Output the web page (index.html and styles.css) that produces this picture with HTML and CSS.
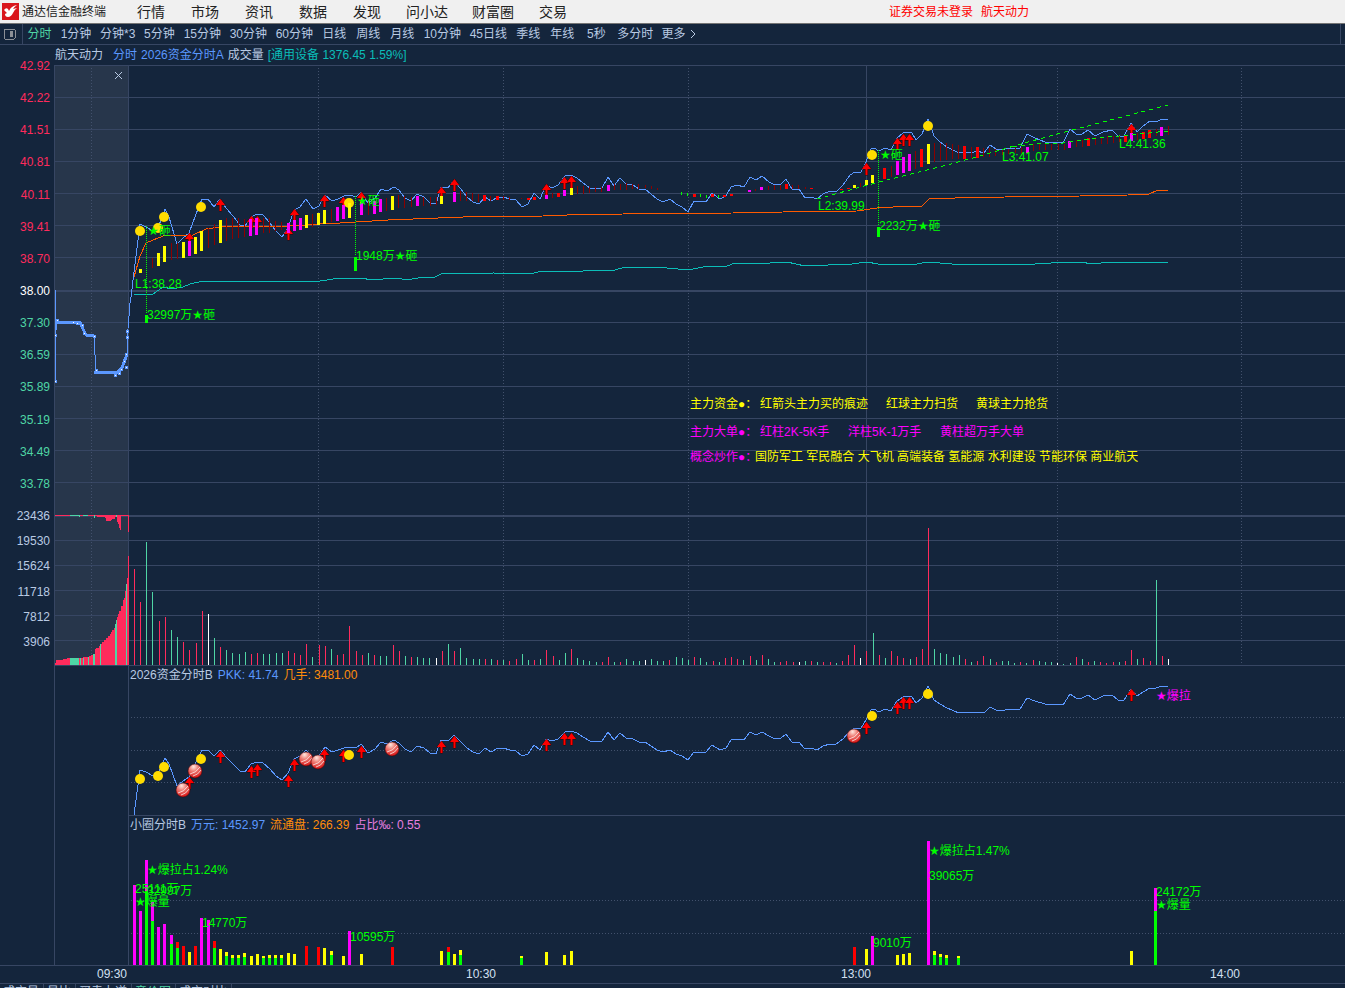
FILE: index.html
```html
<!DOCTYPE html>
<html lang="zh-CN">
	<head>
		<meta charset="utf-8">
		<title>通达信金融终端</title>
		<link rel="stylesheet" href="styles.css">
	</head>

	<body>

		<header class="titlebar">
			<svg class="logo" viewBox="0 0 17 17">
				<rect width="17" height="17" rx="1" fill="#d9161c"/>
				<path d="M2 7 Q4 4 6 6 L7 8 Q9 3 15 2 Q12 4 11 6 L15 5 Q12 7 11 10 Q9 14 6 14 Q3 14 3 11 L5 10 Z" fill="#fff"/>
			</svg>
			<h1>通达信金融终端</h1>
			<nav>
				<a href="#">行情</a><a href="#">市场</a><a href="#">资讯</a><a href="#">数据</a><a href="#">发现</a><a href="#">问小达</a><a href="#">财富圈</a><a href="#">交易</a>
			</nav>
			<div class="login"><a href="#">证券交易未登录</a><a href="#">航天动力</a></div>
		</header>

		<div class="periods">
			<button class="toggle" aria-label="侧栏">
				<svg width="13" height="12" viewBox="0 0 13 12"><rect x="1" y="1" width="11" height="10" rx="1" fill="none" stroke="#8b8f96"/><rect x="7" y="3" width="3" height="6" fill="#8b8f96"/></svg>
			</button>
			<div class="list">
				<button class="active">分时</button><button class="mid">1分钟</button><button class="mid">分钟*3</button><button class="mid">5分钟</button><button class="wide">15分钟</button><button class="wide">30分钟</button><button class="wide">60分钟</button><button>日线</button><button>周线</button><button>月线</button><button class="wide">10分钟</button><button class="wide">45日线</button><button>季线</button><button>年线</button><button>5秒</button><button>多分时</button><button>更多<svg width="8" height="10" viewBox="0 0 8 10"><path d="M2 1 L6 5 L2 9" fill="none" stroke="currentColor"/></svg></button>
			</div>
		</div>

		<main>
			<div class="info main-info">
				<span class="stock">航天动力</span>
				<span class="blue">分时</span>
				<span class="blue">2026资金分时A</span>
				<span>成交量</span>
				<span class="teal">[通用设备 1376.45 1.59%]</span>
			</div>

			<section class="row">
				<ul class="axis price-axis">
					<li class="up">42.92</li><li class="up">42.22</li><li class="up">41.51</li><li class="up">40.81</li><li class="up">40.11</li><li class="up">39.41</li><li class="up">38.70</li>
					<li class="flat">38.00</li>
					<li class="down">37.30</li><li class="down">36.59</li><li class="down">35.89</li><li class="down">35.19</li><li class="down">34.49</li><li class="down">33.78</li>
				</ul>
				<div class="plot">
					<svg id="price" class="price" viewBox="55 65 1290 450" preserveAspectRatio="xMinYMin meet"></svg>
					<button class="close" aria-label="关闭"><svg width="7" height="7" viewBox="0 0 7 7"><path d="M0 0 L7 7 M7 0 L0 7" stroke="currentColor"/></svg></button>
				</div>
			</section>

			<section class="row">
				<ul class="axis">
					<li>23436</li><li>19530</li><li>15624</li><li>11718</li><li>7812</li><li>3906</li>
				</ul>
				<div class="plot volume-plot">
					<svg id="volume" class="volume" viewBox="55 515 1290 150" preserveAspectRatio="xMinYMin meet"></svg>
				</div>
			</section>

			<section class="row">
				<div class="axis"></div>
				<div class="plot">
					<div class="sub">
						<div class="info">
							<span>2026资金分时B</span>
							<span class="blue">PKK: 41.74</span>
							<span class="orange">几手: 3481.00</span>
						</div>
						<svg id="fund" class="small" viewBox="129 685 1216 130" preserveAspectRatio="xMinYMin meet"></svg>
					</div>
				</div>
			</section>

			<section class="row">
				<div class="axis"></div>
				<div class="plot">
					<div class="sub ruled">
						<div class="info">
							<span>小圈分时B</span>
							<span class="blue">万元: 1452.97</span>
							<span class="orange">流通盘: 266.39</span>
							<span class="pink">占比‰: 0.55</span>
						</div>
						<svg id="circle" class="small" viewBox="129 835 1216 130" preserveAspectRatio="xMinYMin meet"></svg>
					</div>
				</div>
			</section>

			<svg id="times" class="times" viewBox="0 966 1345 17" preserveAspectRatio="xMinYMin meet"></svg>
		</main>

		<footer>
			<button>成交量</button><button>量比</button><button>买卖力道</button><button class="active">竞价图</button><button>成交对比</button>
		</footer>

		<script src="chart.js"></script>
	</body>
</html>
```

FILE: styles.css
```css
*{
	box-sizing: border-box;
}
html{
	overflow: hidden;
}
body{
	margin: 0;
	background: #14253c;
	color: #b9cae3;
	font: 12px/16px "Liberation Sans", "DejaVu Sans", "Noto Sans CJK SC", sans-serif;
	white-space: nowrap;
}
button{
	margin: 0;
	padding: 0;
	border: 0;
	background: none;
	color: inherit;
	font: inherit;
}
a{
	color: inherit;
	text-decoration: none;
}
svg{
	display: block;
}
ul{
	list-style: none;
	margin: 0;
	padding: 0;
}

.titlebar{
	display: flex;
	align-items: center;
	height: 24px;
	padding-left: 2px;
	background: #f0f0f0;
	border-bottom: 1px solid #747474;
	color: #222;
}
.logo{
	width: 17px;
	height: 17px;
	margin-right: 3px;
}
.titlebar h1{
	margin: 0;
	font-size: 12px;
	font-weight: normal;
}
.titlebar nav{
	display: flex;
	margin-left: 18px;
	font-size: 14px;
}
.titlebar nav a{
	min-width: 54px;
	padding: 0 12px;
	text-align: center;
}
.login{
	display: flex;
	gap: 8px;
	margin-left: 309px;
	color: #f00;
}

.periods{
	display: flex;
	height: 21px;
	padding-right: 4px;
	border-bottom: 1px solid #374663;
}
.toggle{
	width: 23px;
	padding-left: 3px;
	border-right: 1px solid #374663;
}
.periods .list{
	display: flex;
	flex: 1;
	border-right: 1px solid #374663;
}
.list button{
	display: flex;
	align-items: center;
	justify-content: center;
	min-width: 34px;
	padding: 0 4px;
}
.list button:first-child{
	min-width: 33px;
}
.list button.mid{
	min-width: 40px;
}
.list button.wide{
	min-width: 46px;
}
.list svg{
	margin-left: 4px;
}
.active{
	color: #4fd5a5;
}

.info{
	display: flex;
	gap: 5px;
	height: 19px;
	padding-left: 1px;
	line-height: 19px;
}
.main-info{
	gap: 4px;
	height: 20px;
	padding-left: 55px;
	line-height: 21px;
}
.stock{
	margin-right: 6px;
}
.blue{ color: #5b98ff; }
.teal{ color: #0bbdb8; }
.orange{ color: #ff8c0a; }
.pink{ color: #e87fe0; }
.up{ color: #ff2b5c; }
.flat{ color: #fff; }
.down{ color: #4fd5a5; }

.row{
	display: flex;
}
.axis{
	display: flex;
	flex-direction: column;
	flex: none;
	width: 54px;
	padding-right: 4px;
	margin: -7px 0 7px;
	text-align: right;
}
.axis li{
	flex: 1;
}
.plot{
	position: relative;
	flex: 1;
	min-width: 0;
	border-left: 1px solid #374663;
}
.volume-plot{
	border-bottom: 1px solid #374663;
}
.sub{
	margin-left: 73px;
	border-left: 1px solid #374663;
}
.ruled{
	border-top: 1px solid #374663;
}
.close{
	position: absolute;
	left: 60px;
	top: 7px;
}

.plot > svg, .sub > svg{
	width: 100%;
}
svg.price{ height: 450px; }
svg.volume{ height: 150px; }
svg.small{ height: 130px; }
.times{
	width: 100%;
	height: 18px;
	border-top: 1px solid #374663;
}
.times text{
	fill: #d3e0f2;
}

footer{
	display: flex;
	height: 16px;
	border-top: 1px solid #374663;
}
footer button{
	padding: 0 4px 0 3px;
	border-right: 1px solid #374663;
	line-height: 14px;
}

/* chart marks */
line, rect, polyline, .crisp{
	shape-rendering: crispEdges;
}
.grid{ stroke: #374663; }
.dots{ stroke: #42516c; stroke-dasharray: 1 2; }
.auction{ fill: #27364b; }
.line{ fill: none; stroke: #5b98ff; }
.thick{ fill: none; stroke: #5b98ff; stroke-width: 3; }
.avg{ fill: none; stroke: #ff5a00; }
.cost{ fill: none; stroke: #0bbdb8; }
.trend{ fill: none; stroke: #0f0; stroke-dasharray: 4 4; }
.drop{ stroke: #0f0; stroke-dasharray: 1 1; }
.ball{ fill: #ffdc00; }
.arrow{ fill: #f00; stroke: #300; stroke-width: 1; paint-order: stroke; }
.txt-g{ fill: #0f0; }
.txt-y{ fill: #ff0; }
.txt-m{ fill: #f0f; }
```

FILE: chart.js
```js
const FAR = 4000;
const colors = { y: "#ff0", m: "#f0f", r: "#f00", g: "#0f0", d: "#8b0000" };
const volColors = { r: "#ff2b5c", g: "#4fd5a5", w: "#fff" };

function add(id, markup) {
	document.getElementById(id).innerHTML += markup;
}
function hline(y, cls = "grid", x = 55) {
	return `<line class="${cls}" x1="${x}" x2="${FAR}" y1="${y + 0.5}" y2="${y + 0.5}"/>`;
}
function vline(x, y1, y2, cls = "grid") {
	return `<line class="${cls}" x1="${x + 0.5}" x2="${x + 0.5}" y1="${y1}" y2="${y2}"/>`;
}
function bar(x, y1, y2, color, w = 3) {
	return `<rect x="${x}" y="${y1}" width="${w}" height="${Math.max(1, y2 - y1)}" fill="${color}"/>`;
}
function poly(points, cls) {
	return `<polyline class="${cls}" points="${points}"/>`;
}
function text(x, mid, str, cls) {
	return `<text class="${cls}" x="${x}" y="${mid + 4}">${str}</text>`;
}
function ball(x, y) {
	return `<circle class="ball" cx="${x}" cy="${y}" r="5"/>`;
}
function redBall(x, y) {
	return `<g transform="translate(${x} ${y})"><circle r="7" fill="url(#shine)" stroke="#400" stroke-width="0.5"/>
		<path d="M-5 3 Q1 2 5 -4 M-2 5 Q3 4 6 -1" fill="none" stroke="#fff" stroke-opacity="0.7"/></g>`;
}
function arrow(x, y) {
	return `<path class="arrow" d="M${x + 0.5} ${y} l4.5 6 h-3.5 v6 h-2 v-6 h-3.5 z"/>`;
}
const pairs = s => s.trim().split(/\s+/).map(p => p.split(",").map(Number));

// minute prices, shared by the price panel and the fund panel
const prices = `129,310 131,297 134,272 140,224 146,227 153,231 158,228 165,209 169,217 177,244 183,238 189,233 196,214 202,199 208,199 214,207 220,199 226,208 233,216 240,225 245,226 251,217 257,214 263,215 270,223 276,231 282,237 288,228 294,210 300,207 306,199 313,209 319,206 325,195
	332,201 338,199 344,196 350,195 356,197 361,192 368,203 375,198 381,189 387,191 394,187 399,190 405,198 411,201 417,194 424,197 430,203 436,204 441,187 448,188 454,180 460,188 467,197 473,202 479,204 485,197 491,201 498,197 503,197 510,199 516,200 522,207 528,204 534,193 540,199 546,185 552,188 558,185 565,176 571,175 577,178 583,183 590,188 597,188 602,188 608,177 614,186 620,178 626,184 633,185 639,189 645,189 651,194 657,199 663,202 670,199 676,204 682,207 688,212
	694,201 706,202 712,193 720,199 726,196 731,187 737,185 744,187 750,177 756,180 762,176 769,182 775,185 781,184 786,179 792,189 799,189 805,198 811,197 817,199 823,194 830,191 836,192 843,185 850,175 855,172 861,172 866,162 871,149 874,148 879,151 885,148 891,150 897,138 903,133 909,132 912,133 916,140 922,134 928,119 934,136 940,142 947,147 959,153 965,152 971,153 977,151 984,153 990,145 996,149 1002,150 1008,148 1015,148 1020,148 1027,134 1035,138 1045,142 1063,143
	1070,129 1076,134 1082,134 1088,130 1095,136 1103,132 1112,130 1118,136 1124,136 1131,123 1137,132 1143,126 1150,121 1156,122 1162,119 1168,119`;

const avg = `134,277 140,256 146,243 158,238 166,235 193,235 206,229 220,227 243,226 290,226 320,224 340,223 388,220 463,217 543,216 567,215 623,214 733,213 783,212 857,211 877,208 893,207 922,206 929,199 955,198 1005,197 1080,196 1128,195 1149,194 1158,190 1168,190`;
const cost = `134,294 147,295 153,294 163,287 172,289 183,287 190,284 203,281 217,281 240,281 320,281 340,278 363,278 370,280 397,278 407,280 423,277 433,278 443,273 457,273 473,274 493,273 530,274 542,271 583,271 615,270 625,267 657,267 688,270 703,267 727,266 735,263 770,263 787,262 805,266 852,264 867,262 878,264 917,264 927,262 952,264 1035,264 1067,262 1080,262 1093,264 1110,262 1130,263 1147,262 1168,262`;

// kind,x,top,bottom
const candles = `y140,269,273 d152,258,268 y158,253,266 y164,246,262 d171,243,260 d177,243,259 y183,242,258 m189,241,256 y195,237,254 y201,231,251 d208,228,248 d214,224,245 y220,220,243 d226,218,241 d232,218,239 d238,218,238 d244,219,237 m250,219,236 m256,218,235 d263,218,233 d269,218,233 d275,221,231 d281,222,230 m288,223,233 m294,220,231 m300,218,230 y306,215,228 d312,214,227 y318,213,225 y324,210,224
	d331,209,222 m337,207,221 m343,205,219 y349,203,218 m361,202,215 d368,200,215 m374,201,214 m380,199,212 d386,198,211 y392,196,210 d398,195,208 d404,196,208 d411,197,207 m417,196,206 d423,197,206 d430,197,206 d436,197,205 y441,196,204 m454,192,202 d460,191,201 d466,192,201 d472,193,201 d478,194,202 r484,195,201 d490,196,201 r497,196,200 d503,196,200 d509,197,200 d521,198,199 r528,198,200 r534,197,200 m546,195,199 d552,193,198 r558,193,197 m564,190,196 y571,188,195 d577,186,194 d583,186,194 d589,187,193 d595,187,192 d601,187,192 m608,185,191 d614,184,190 d620,184,190 d626,183,190 d632,184,189 d638,184,189 d645,185,188 d651,186,189 d657,188,190
	r694,194,197 r712,194,197 r724,195,197 r731,194,196 m749,190,192 d755,189,191 m761,187,190 d768,186,190 d774,185,190 d780,185,190 r786,184,189 d792,185,189 d798,185,189 d805,187,189 r811,188,189 r841,189,190 r848,188,189 y854,185,188 d860,183,187 y866,180,185 y872,175,183 r884,168,179 d891,166,177 m897,161,175 m903,157,173 m909,154,171 d915,151,169 r921,149,167 y928,144,164 d934,143,162 d940,143,161 d946,143,160 d952,144,159 d958,145,159 r964,146,159 d971,147,158 r977,147,158 d983,148,157 d989,148,157 d995,149,156 d1002,149,155 d1008,149,154 d1015,148,153 d1021,147,153
	m1027,147,153 d1033,144,151 d1039,144,150 d1045,144,150 d1051,144,150 d1058,144,150 d1064,144,150 m1069,141,148 d1076,140,147 d1082,140,147 r1088,138,146 d1095,137,145 d1101,137,144 d1107,136,144 d1113,136,143 d1119,136,142 r1125,135,142 m1131,133,141 d1137,133,140 r1143,132,139 r1149,130,138 d1156,129,136 m1161,127,136 d1168,126,135`;

// bar heights per minute
const volumes = `r96 r63 g123 g73 r44 r48 g35 g28 r23 r15 r22 r54 w51 g27 r18 g15 g12 g11 g13 r11 r12 g11 g11 g12 g12 r14 r12 r10 r21 g8 r20 r19 g16 r10 r11
	r39 r14 r10 g12 r10 g9 g9 r20 r14 g9 r8 g8 g7 g7 w7 r14 g21 r14 g17 g7 g6 g6 r6 g6 r5 g5 r4 r6 g11 g5 r5 g6 r15 r9 g5 g12 r16 g7 g5
	g4 g3 r3 r8 g3 r3 g6 g4 g4 w5 g6 g4 g4 r5 g8 g7 g5 r8 g7 g3 r4 g3 r7 r8 r6 g5 r9 g5 r10 g6 g3 r3 r4 r3 w3 g4 r4 g3 r3 r3 g2 r4 r10 r20 w7 r14 g32 r10 g7 r14 r9 r7 g6 r8 r16 r137 g16 g12 g11 g8 g10 r6
	g3 r4 r9 g6 r3 g4 g4 g2 r3 g2 r5 g4 g3 g3 w2 g1 g2 r8 g6 r3 g4 r3 r2 r3 g3 r4 r15 g6 r7 r4 g85 r9 w6`.trim().split(/\s+/);

const up = "#ff2b5c", down = "#4fd5a5";

let p = `<rect class="auction" x="55" y="66" width="73" height="450"/>`;
p += [65, 97, 129, 161, 193, 225, 257, 322, 354, 386, 418, 450, 482].map(y => hline(y)).join("");
p += hline(290) + hline(291);
p += [91, 318, 503, 688, 1057, 1241].map(x => vline(x, 68, 515, "dots")).join("");
p += vline(128, 66, 515) + vline(866, 66, 515);

// call auction
p += poly("55.5,290 55.5,381 55.5,335 57,320", "line") + poly("57,322 80,322 83,329 86,335 94,336", "thick") + poly("94.5,336 95.5,372", "line");
p += poly("94,372 118,372 122,368 124,362 126,357 127,354", "thick") + poly("127.5,355 127.5,335 129.5,310", "line");
p += pairs("55,381 55,335 57,320 73,322 77,323 82,325 84,333 94,336 96,370 115,375 119,373 121,369 124,361 126,367 126,354 127,337 127,331")
	.map(([x, y]) => bar(x - 1, y - 1, y + 2, "#5b98ff") + bar(x, y, y + 1, "#fff", 1)).join("");

p += poly(prices, "line") + poly(avg, "avg") + poly(cost, "cost");
p += pairs("189,233 220,199 251,216 257,216 288,228 294,209 324,195 343,197 361,192 441,187 454,179 546,184 564,177 571,176 866,163 897,138 903,134 909,134 1131,124").map(a => arrow(...a)).join("");
p += pairs("140,231 158,228 164,217 201,207 349,203 872,155 928,126").map(a => ball(...a)).join("");
p += candles.split(/\s+/).map(c => {
	const [x, y1, y2] = c.slice(1).split(",").map(Number);
	return c[0] === "d" ? bar(x, y1, y2, colors.d, 1) : bar(x - 1, y1, y2, colors[c[0]]);
}).join("");
p += pairs("681,192 687,193 700,194 706,195 718,195").map(([x, y]) => bar(x, y, y + 3, "#0f0", 1)).join("");
p += poly("817,199 879,182 947,165 980,156 1007,148 1057,134 1168,105", "trend");
p += poly("1013,147 1033,144 1063,143 1097,138 1130,135 1168,131", "trend");
p += vline(146, 226, 314, "drop") + bar(145, 315, 323, "#0f0");
p += vline(355, 196, 255, "drop") + bar(354, 257, 271, "#0f0");
p += vline(878, 150, 226, "drop") + bar(877, 227, 237, "#0f0");
p += text(148, 231, "★砸", "txt-g") + text(357, 201, "★砸", "txt-g") + text(880, 155, "★砸", "txt-g");
p += text(147, 315, "32997万★砸", "txt-g") + text(356, 256, "1948万★砸", "txt-g") + text(879, 226, "2232万★砸", "txt-g");
p += text(135, 284, "L1:38.28", "txt-g") + text(818, 206, "L2:39.99", "txt-g") + text(1002, 157, "L3:41.07", "txt-g") + text(1119, 144, "L4:41.36", "txt-g");

p += text(690, 404, "主力资金●：", "txt-y") + text(760, 404, "红箭头主力买的痕迹", "txt-y") + text(886, 404, "红球主力扫货", "txt-y") + text(976, 404, "黄球主力抢货", "txt-y");
p += text(690, 432, "主力大单●：", "txt-m") + text(760, 432, "红柱2K-5K手", "txt-m") + text(848, 432, "洋柱5K-1万手", "txt-m") + text(940, 432, "黄柱超万手大单", "txt-m");
p += text(690, 457, "概念炒作●：", "txt-m") + text(755, 457, "国防军工 军民融合 大飞机 高端装备 氢能源 水利建设 节能环保 商业航天", "txt-y");
add("price", p);

let v = `<rect class="auction" x="55" y="515" width="73" height="150"/>`;
v += [515, 516, 540, 565, 590, 615, 640].map(y => hline(y)).join("");
v += [91, 318, 503, 688, 1057, 1241].map(x => vline(x, 515, 665, "dots")).join("");
v += vline(128, 515, 665) + vline(866, 515, 665);
// matched volume grows from left to right, unmatched hangs from the top
v += `<path class="crisp" fill="${up}" d="M55 665 V663 H56 V660 H63 V659 H67 V658 H83 V657 H89 V656 H91 V655 H93 V654 H95 V649 H96 V648 H99 V646 H100 V644 H102 V642 H104 V640 H106 V638 H108 V636 H110 V634 H111 V632 H112 V630 H114 V628 H115 V624 H116 V620 H117 V617 H118 V614 H119 V611 H121 V606 H123 V600 H124 V598 H125 V591 H126 V584 H127 V578 H128 V556 H129 V665 Z"/>`;
v += [[70, 658, 9], [80, 658, 1], [83, 658, 1], [88, 657, 1], [93, 654, 2], [100, 644, 1], [115, 624, 1], [116, 620, 1], [126, 584, 1]].map(([x, y, w]) => bar(x, y, 665, down, w)).join("");
v += `<path class="crisp" fill="${up}" d="M55 515 H129 V532 H128 V516 H121 V530 H120 V528 H119 V524 H118 V522 H117 V517 H115 V519 H112 V520 H111 V521 H106 V518 H105 V517 H97 V516 H55 Z"/>`;
v += bar(70, 515, 516, down, 10) + bar(83, 515, 516, down, 5) + bar(94, 515, 518, down, 1) + bar(116, 515, 517, down, 1) + bar(79, 516, 517, down, 1);
v += volumes.map((s, k) => bar(Math.round(134 + k * 6.155), 665 - s.slice(1), 665, volColors[s[0]], 1)).join("");
add("volume", v);

const fundLine = pairs(prices).filter(([x]) => x >= 134).map(([x, y]) => [x, Math.round(686 + (y - 119) * 0.8)]);
fundLine[0][1] = 815;
let f = `<defs><radialGradient id="shine" cx="0.4" cy="0.2" r="0.8"><stop offset="0" stop-color="#ffe8e0"/><stop offset="0.4" stop-color="#f08078"/><stop offset="1" stop-color="#d81414"/></radialGradient></defs>`;
f += [717, 750, 782].map(y => hline(y, "dots", 131)).join("");
f += poly(fundLine.join(" "), "line");
f += pairs("189,777 220,751 251,766 257,764 288,775 294,759 324,749 343,750 361,746 441,741 454,736 546,739 564,733 571,733 866,722 897,702 903,697 909,697 1131,689").map(a => arrow(...a)).join("");
f += pairs("183,790 195,771 306,759 318,762 392,749 854,736").map(a => redBall(...a)).join("");
f += pairs("140,779 158,776 164,767 201,759 349,755 872,716 928,694").map(a => ball(...a)).join("");
f += text(1156, 696, "★爆拉", "txt-m");
add("fund", f);

// color, x, top; a later green bar covers the lower part
const circle = `m134,885 m140,911 m146,860 g146,891 m152,902 g152,921 m158,927 m164,924 m171,935 g171,944 r177,942 g177,948 r183,946 y189,952 r195,946 m201,918 m208,920 r214,941 g214,948 y220,949 y226,952 g226,956 y232,955 g232,958 y238,955 g238,958 y244,953 g244,957 y251,956 y257,954 y263,956 g263,958 y269,955 g269,958 y275,955 g275,958 y281,955 g281,958 y288,953 y294,954
	r306,946 r318,947 y324,948 y331,951 g331,955 y343,956 m349,931 y361,954 r392,947 y441,951 r448,947 g448,952 y454,954 y460,950 g460,955 y521,956 g521,958 y546,952 y564,955 y571,951 r854,947 y866,949 m872,936 y897,955 y903,954 y909,953 m928,841 y934,951 g934,955 y940,954 g940,957 y946,955 g946,958 y958,956 g958,958 y1131,951 m1155,888 g1155,911`;
let c = [900, 933].map(y => hline(y, "dots", 131)).join("");
c += circle.split(/\s+/).map(s => {
	const [x, y] = s.slice(1).split(",").map(Number);
	return bar(x - 1, y, 965, colors[s[0]]);
}).join("");
c += text(147, 870, "★爆拉占1.24%", "txt-g") + text(135, 889, "25111万", "txt-g") + text(147, 891, "32997万", "txt-g") + text(135, 902, "★爆量", "txt-g");
c += text(202, 923, "14770万", "txt-g") + text(350, 937, "10595万", "txt-g") + text(873, 943, "9010万", "txt-g");
c += text(929, 851, "★爆拉占1.47%", "txt-g") + text(929, 876, "39065万", "txt-g") + text(1156, 892, "24172万", "txt-g") + text(1156, 905, "★爆量", "txt-g");
add("circle", c);

add("times", text(97, 974, "09:30", "") + text(466, 974, "10:30", "") + text(841, 974, "13:00", "") + text(1210, 974, "14:00", "")
	+ `<line class="grid" x1="54.5" x2="54.5" y1="964" y2="966"/>`);
```
